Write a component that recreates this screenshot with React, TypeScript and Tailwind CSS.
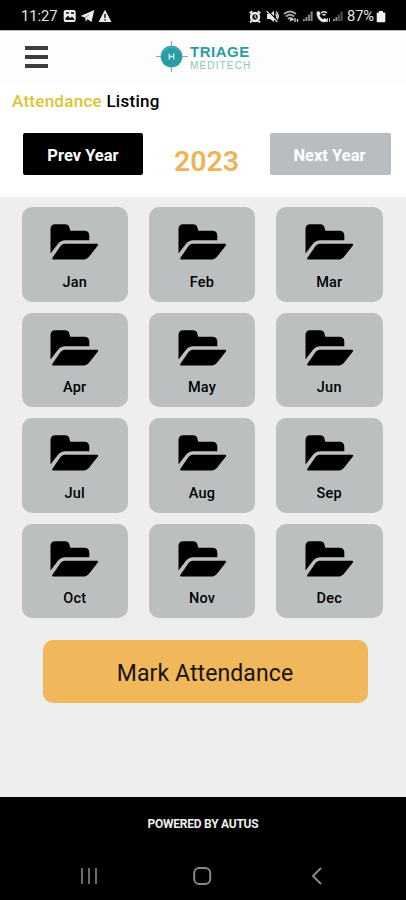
import React from "react";

const months = ["Jan", "Feb", "Mar", "Apr", "May", "Jun", "Jul", "Aug", "Sep", "Oct", "Nov", "Dec"];

function FolderOpen() {
  return (
    <svg width="49" height="36" viewBox="0 0 49 36" className="block" fill="#000">
      <path d="M.5 29.5V5Q.5 .3 5.2.3H15Q19 .3 19.6 4.2L20.3 6.8H34.5Q39 6.8 39.3 11.3V16.3H15.5Q10.5 16.3 7.6 20.3Z" />
      <path d="M14.8 19.8H46.8Q49 19.8 47.7 21.8L39.8 31.7Q37 35.6 32.4 35.6H3.5Q1.3 35.6 2.6 33.6L9.5 23.5Q11.8 19.8 14.8 19.8Z" />
    </svg>
  );
}

function Signal({ fade }: { fade: string }) {
  return (
    <svg width="12" height="12" viewBox="0 0 12 12" fill="#999">
      <path d="M1 9h1.8v2H1zM3.5 7h1.8v4H3.5z" />
      <path d="M6 4.5h1.9V11H6zM8.6 1.5h2V11h-2z" fill={fade} />
    </svg>
  );
}

function StatusBar() {
  return (
    <div className="flex h-[30px] items-center bg-black pl-[21px] pr-[20px] pt-[2px] text-[#e6e6e6]">
      <span className="w-[38px] whitespace-nowrap text-[14.7px] leading-[28px]">11:27</span>
      <svg className="ml-1" width="14" height="14" viewBox="0 0 14 14">
        <rect x=".7" y="1" width="12" height="12" rx="2" fill="#eee" />
        <path d="M2.5 9 5 6.8 7.3 9 9 7.6 11.3 10v1H2.5z" fill="#111" />
        <path d="M3 3h3v1.7H3zM8 3h3v2H8z" fill="#333" />
      </svg>
      <svg className="ml-[3px]" width="15" height="14" viewBox="0 0 15 14">
        <path d="M.5 7 14.3 1 11.5 13 7.6 10.3 5.8 12.5 5 8.5z" fill="#eee" />
        <path d="m5 8.5 4-2.6" fill="none" stroke="#555" strokeWidth=".6" />
      </svg>
      <svg className="ml-[3px]" width="14" height="14" viewBox="0 0 14 14">
        <path d="M7 .8 13.5 13H.5z" fill="#eee" />
        <path d="M6.3 5h1.4v4H6.3zM6.3 10h1.4v1.4H6.3z" fill="#111" />
      </svg>
      <div className="ml-auto flex items-center">
        <svg width="12" height="13" viewBox="0 0 12 13">
          <circle cx="6" cy="7" r="5.2" fill="#eee" />
          <path d="m.8 3.3 2.4-2M11.2 3.3 8.8 1.3M2.5 11 1 12.4M9.5 11l1.5 1.4" stroke="#eee" strokeWidth="2" />
          <circle cx="6" cy="7" r="2.7" fill="#111" />
          <path d="M6 5v2.3l1.6.8" fill="none" stroke="#eee" />
        </svg>
        <svg className="ml-[5px]" width="13" height="13" viewBox="0 0 13 13">
          <path d="M1 4h3l4-3v11L4 9H1z" fill="#e5e5e5" />
          <path d="M9.5 4q2.5 2.5 0 5M10 1.5q4.5 5 0 10" fill="none" stroke="#ccc" strokeWidth="1.4" />
          <path d="m1 0 11 11" stroke="#000" strokeWidth="1.2" />
          <path d="m.7 1.2 10.6 10.6" stroke="#eee" strokeWidth="1.2" />
        </svg>
        <svg className="ml-1" width="16" height="13" viewBox="0 0 16 13">
          <path d="M1 4q6-5 12 0M3 6.5q4-3.5 8 0M5 9q2-2 4 0" fill="none" stroke="#aaa" strokeWidth="2" />
          <path d="m7 10.5 2-2 1 1zM12 8v4M14.5 12V9" fill="#ddd" stroke="#ccc" strokeWidth="1.4" />
        </svg>
        <div className="ml-[3px]"><Signal fade="#888" /></div>
        <svg className="ml-[2px]" width="15" height="13" viewBox="0 0 15 13">
          <path d="M1 2q1.5-1 2.5 0l.7 2.5-1 1q1 3 4 4l1.2-1 2.2.8q1 1.2-.4 2.4Q3 13 1 5z" fill="#eee" stroke="#eee" strokeWidth=".6" />
          <path d="M5 3q3-2.5 6 0M6.5 5.2q1.5-1.3 3 0" fill="none" stroke="#ddd" strokeWidth="1.6" />
          <path d="M11.5 8v4M13.5 8v4" stroke="#bbb" />
        </svg>
        <div className="ml-px"><Signal fade="#555" /></div>
        <span className="ml-[3px] w-[29px] whitespace-nowrap text-[14.7px] leading-[28px] tracking-[-0.1px]">87%</span>
        <svg width="10" height="13" viewBox="0 0 10 13" fill="#f1f1f1">
          <path d="M3 1h4v1.5h1.3q1 0 1 1v7.7q0 1-1 1H1.7q-1 0-1-1V3.5q0-1 1-1H3z" />
        </svg>
      </div>
    </div>
  );
}

function Logo() {
  return (
    <div className="flex h-[38px] w-[98px] items-center">
      <svg width="34" height="38" viewBox="0 0 34 38" className="shrink-0">
        <path d="M1 18.5h32M16.5 3v31" stroke="#8aa9ab" strokeWidth="1.2" />
        <circle cx="16.5" cy="18.5" r="10.8" fill="#299da5" />
        <path d="M7 14.5q9-10 18-1" fill="none" stroke="#54b3b6" />
        <path d="M14.3 15.5v6M18.7 15.5v6M14.3 18.5h4.4" stroke="#d0ecec" strokeWidth="1.4" />
      </svg>
      <div className="ml-px w-[63px] whitespace-nowrap font-['Liberation_Sans',Arial,sans-serif]">
        <div className="text-[15px] font-bold leading-[17px] tracking-[0.5px] text-[#299da1]">TRIAGE</div>
        <div className="text-[10px] leading-[11px] tracking-[1.15px] text-[#8ac5bd]">MEDITECH</div>
      </div>
    </div>
  );
}

export default function App() {
  return (
    <div className="flex h-[900px] w-[406px] flex-col overflow-hidden bg-[#eeeeee] font-[Roboto,sans-serif] text-black">
      <StatusBar />
      <header className="flex h-[54px] items-start border-t border-[#b8b8b8] bg-[#fdfdfd] pl-[25px] pt-[7px]">
        <button aria-label="Menu" className="mt-[8px] flex h-[22px] w-[23px] flex-col justify-between">
          <span className="h-[4px] w-full bg-[#3c3c40]" />
          <span className="h-[4px] w-full bg-[#3c3c40]" />
          <span className="h-[4px] w-full bg-[#3c3c40]" />
        </button>
        <div className="ml-[107px]"><Logo /></div>
      </header>
      <section className="h-[113px] bg-white">
        <h1 className="pl-[12px] pt-[6px] text-[17px] font-medium leading-[23px] tracking-[0.27px]">
          <span className="text-[#dcc331]">Attendance</span> Listing
        </h1>
        <div className="ml-[23px] mt-[20px] flex w-[368px] justify-between">
          <button className="h-[42px] w-[120px] rounded-[2px] bg-black pt-[5px] text-[16.5px] font-bold text-white">Prev Year</button>
          <span className="pt-[12.5px] text-[28.5px] font-semibold leading-[32px] text-[#edb455]">2023</span>
          <button className="h-[42px] w-[121px] rounded-[2px] bg-[#babdbf] pt-[5px] pr-[2px] text-[16.5px] font-bold text-white">Next Year</button>
        </div>
      </section>
      <main className="flex flex-1 flex-col">
        <div className="ml-[21.5px] mt-[10.2px] grid w-[361px] grid-cols-3 gap-x-[20.8px] gap-y-[11px]">
          {months.map((month) => (
            <button key={month} className="flex h-[94.5px] flex-col items-center rounded-[10px] bg-[#bbbfc0] pt-[17px]">
              <FolderOpen />
              <span className="mt-[13.5px] text-[14.5px] font-medium leading-[18px] tracking-[0.2px]">{month}</span>
            </button>
          ))}
        </div>
        <button className="ml-[42.5px] mt-[21.5px] h-[63px] w-[325px] rounded-[10px] bg-[#f0b75b] pt-[6px] text-[23px] tracking-[0.1px] text-[#17130c]">
          Mark Attendance
        </button>
      </main>
      <footer className="h-[103px] bg-black">
        <p className="pt-[18px] text-center text-[12px] font-bold leading-[18px] tracking-[-0.25px] text-[#eeeeee]">POWERED BY AUTUS</p>
        <nav className="mt-[31px] flex h-[24px] items-center pl-[80px]">
          <svg width="18" height="20" viewBox="0 0 18 20" stroke="#777" strokeWidth="1.8">
            <path d="M2 2v16M9 2v16M16 2v16" />
          </svg>
          <svg className="ml-[94px]" width="20" height="20" viewBox="0 0 20 20" fill="none" stroke="#888" strokeWidth="2">
            <rect x="2.2" y="2" width="16" height="16" rx="5" />
          </svg>
          <svg className="ml-[98px]" width="14" height="20" viewBox="0 0 14 20" fill="none" stroke="#888" strokeWidth="2">
            <path d="m11 2-8 8 8 8" />
          </svg>
        </nav>
      </footer>
    </div>
  );
}
